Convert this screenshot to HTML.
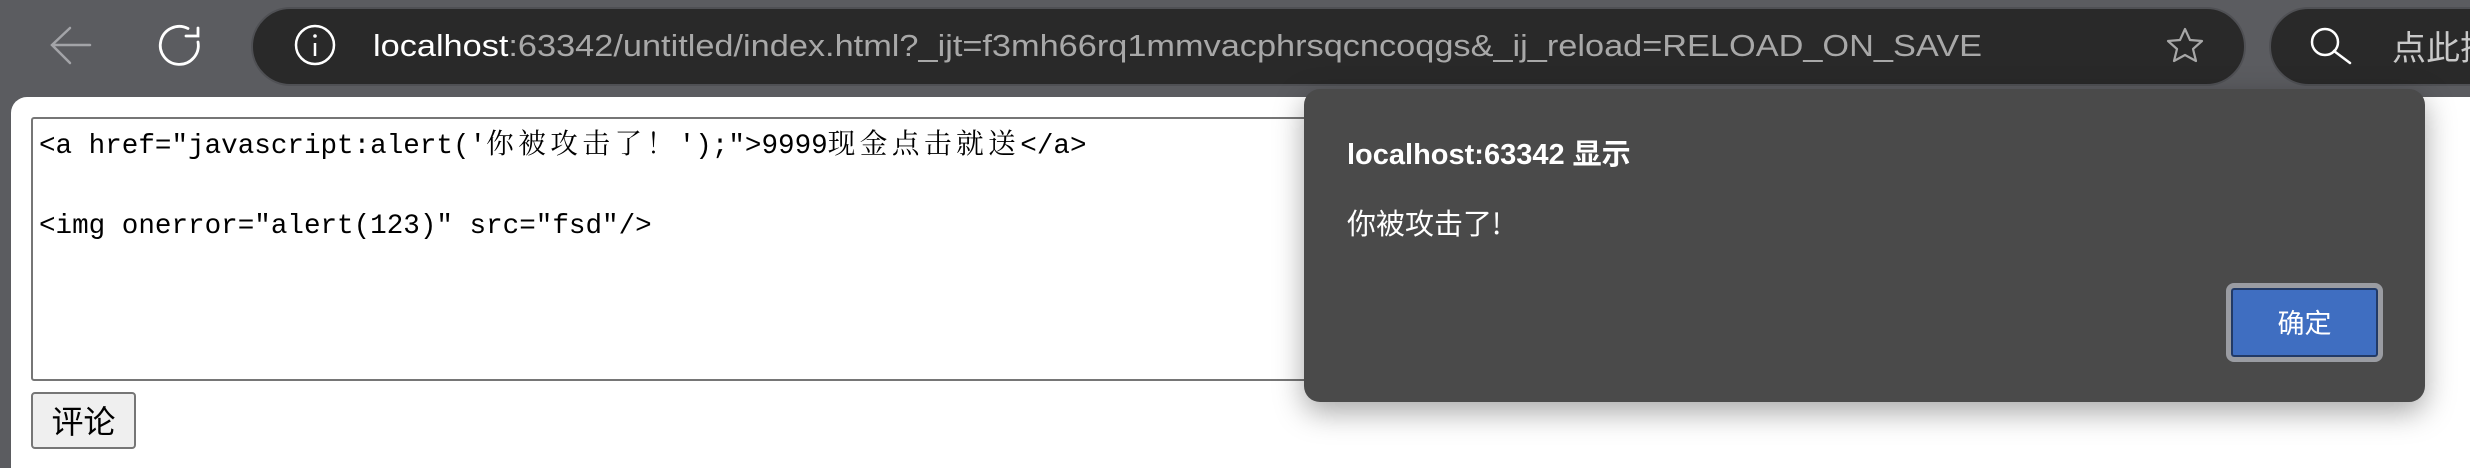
<!DOCTYPE html>
<html><head><meta charset="utf-8">
<style>
*{margin:0;padding:0;box-sizing:border-box}
body{width:2470px;height:468px;background:#5b5c60;position:relative;overflow:hidden;font-family:"Liberation Sans","Noto Sans CJK SC",sans-serif}
.page{position:absolute;left:11px;top:97px;right:0;bottom:0;background:#fff;border-top-left-radius:16px}
.ta{position:absolute;left:31px;top:117px;width:1400px;height:264px;border:2px solid #767676;border-radius:3px;font-family:"Liberation Mono","Noto Serif CJK SC",monospace;font-size:27.6px;color:#000;padding:8px 0 0 6px;line-height:40px;white-space:pre}
.ta .c{letter-spacing:4.5px}
.btn{position:absolute;left:31px;top:392px;width:105px;height:57px;border:2px solid #767676;border-radius:4px;background:#efefef;font-family:"Noto Sans CJK SC",sans-serif;font-size:32px;text-align:center;line-height:52px;color:#000}
.dlg{position:absolute;left:1304px;top:89px;width:1121px;height:313px;background:#4a4a4a;border-radius:16px;box-shadow:0 10px 30px rgba(0,0,0,.35)}
.t1{position:absolute;left:43px;top:42px;color:#fff;font-weight:bold;font-size:29px;font-family:"Liberation Sans","Noto Sans CJK SC",sans-serif}
.t2{position:absolute;left:43px;top:112px;color:#fff;font-size:29px;font-family:"Noto Sans CJK SC",sans-serif}
.ok{position:absolute;left:922px;top:194px;width:157px;height:79px;border:5px solid #9a9ca2;border-radius:8px;background:#3f6ec1;box-shadow:inset 0 0 0 2px #223a66;color:#fff;font-size:27px;text-align:center;line-height:68px;font-family:"Noto Sans CJK SC",sans-serif}
</style></head><body>
<svg width="2470" height="97" style="position:absolute;left:0;top:0">
<g fill="none" stroke="#a3a4a8" stroke-width="2.5" stroke-linecap="round"><path d="M90 45H52M70 28L52 45L70 63"/></g>
<g fill="none" stroke="#fff" stroke-width="2.8" stroke-linecap="round"><path d="M198 42A19 19 0 1 1 188 28.5"/><path d="M186 36H198V28"/></g>
<rect x="252" y="8" width="1993" height="77" rx="38.5" fill="#292929" stroke="#4f5054" stroke-width="2"/>
<circle cx="315" cy="45" r="19" fill="none" stroke="#fff" stroke-width="2.5"/>
<path d="M315 43V56" stroke="#fff" stroke-width="2.5"/><circle cx="315" cy="36" r="1.8" fill="#fff"/>
<text x="373" y="56" font-family="Liberation Sans,sans-serif" font-size="31" textLength="1609" lengthAdjust="spacingAndGlyphs"><tspan fill="#fff">localhost</tspan><tspan fill="#a8a8a8">:63342/untitled/index.html?_ijt=f3mh66rq1mmvacphrsqcncoqgs&amp;_ij_reload=RELOAD_ON_SAVE</tspan></text>
<path d="M2185 29L2190 40L2202 41L2193 49L2196 61L2185 55L2174 61L2177 49L2168 41L2180 40Z" fill="none" stroke="#a8a8a8" stroke-width="2.2" stroke-linejoin="round"/>
<rect x="2270" y="8" width="260" height="77" rx="38.5" fill="#292929" stroke="#4f5054" stroke-width="2"/>
<circle cx="2325" cy="42" r="13" fill="none" stroke="#fff" stroke-width="2.5"/>
<path d="M2334 51L2350 63" stroke="#fff" stroke-width="2.5" stroke-linecap="round"/>
<text x="2392" y="60" font-family="Noto Sans CJK SC,sans-serif" font-size="34" fill="#c8c8c8">点此搜索</text>
</svg>
<div class="page"></div>
<div class="ta">&lt;a href="javascript:alert('<span class="c">你被攻击了！</span>');"&gt;9999<span class="c">现金点击就送</span>&lt;/a&gt;

&lt;img onerror="alert(123)" src="fsd"/&gt;</div>
<div class="btn">评论</div>
<div class="dlg">
<div class="t1">localhost:63342 显示</div>
<div class="t2">你被攻击了!</div>
<div class="ok">确定</div>
</div>
</body></html>
